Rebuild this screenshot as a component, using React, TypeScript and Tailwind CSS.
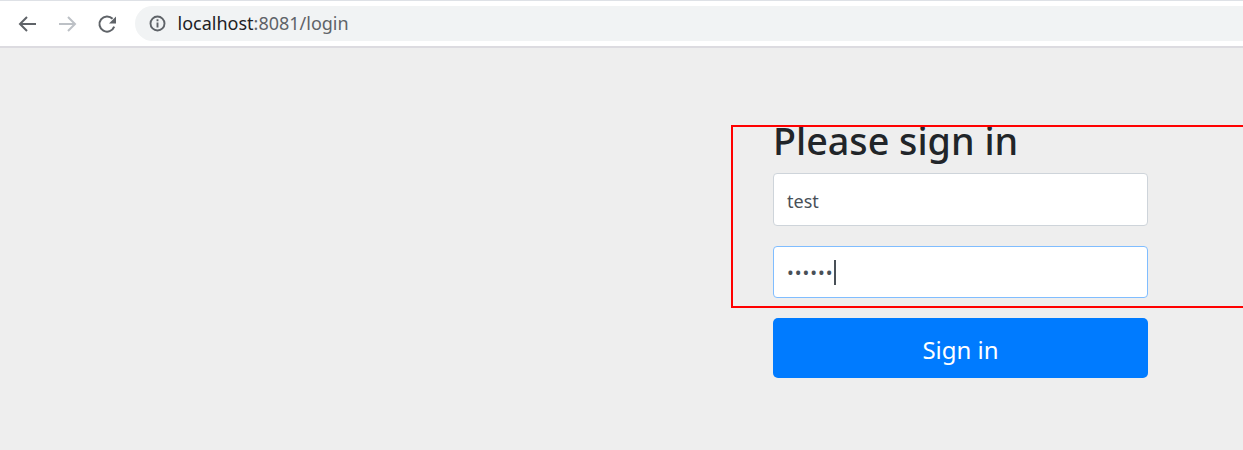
export default function App() {
  return (
    <div className="relative flex h-[450px] w-[1243px] flex-col overflow-hidden bg-[#eeeeee] font-['Noto_Sans',sans-serif]">
      {/* Browser toolbar */}
      <header className="flex h-[48px] shrink-0 items-start border-t border-b-2 border-t-[#dee1e6] border-b-[#dcdbe0] bg-white pl-[17px]">
        <div className="mt-[13px] flex items-center">
          <svg width="20" height="20" viewBox="0 0 20 20" fill="none" stroke="#5f6368" strokeWidth="2" className="mr-[20px]">
            <path d="M19 10H3M10 3l-7 7 7 7" />
          </svg>
          <svg width="20" height="20" viewBox="0 0 20 20" fill="none" stroke="#bdc1c6" strokeWidth="2" className="mr-[20px]">
            <path d="M2 10h16M11 3l7 7-7 7" />
          </svg>
          <svg width="20" height="20" viewBox="0 0 20 20" fill="none" className="mr-[18px]">
            <path d="M17.2 12.6A7.6 7.6 0 1 1 15.6 4.8" stroke="#5f6368" strokeWidth="2" />
            <path d="M19 2.5V9.5h-7z" fill="#5f6368" />
          </svg>
        </div>
        <div className="mt-[5px] flex h-[35px] flex-1 items-center rounded-l-full bg-[#f1f3f4] pl-[14px]">
          <svg width="17" height="17" viewBox="0 0 17 17" fill="none" className="mr-[11.5px]">
            <circle cx="8.5" cy="8.5" r="7" stroke="#5f6368" strokeWidth="1.9" />
            <path d="M8.5 7.5v5M8.5 4.2v2" stroke="#5f6368" strokeWidth="1.9" />
          </svg>
          <span className="pb-[2px] text-[18px] leading-none text-[#202124]">
            localhost<span className="text-[#5f6368]">:8081/login</span>
          </span>
        </div>
      </header>

      {/* Login form */}
      <main className="flex flex-1 flex-col pl-[773px] pt-[72px]">
        <form className="flex w-[375px] flex-col">
          <h1 className="mb-[8px] h-[45px] text-[37.7px] leading-[41px] font-medium whitespace-nowrap text-[#212529]">Please sign in</h1>
          <div className="mb-[20px] flex h-[53px] items-center rounded-[4px] border border-[#ced4da] bg-white px-[13px] pt-[4px] text-[18px] text-[#495057]">
            test
          </div>
          <div className="mb-[20px] flex h-[52px] items-center rounded-[4px] border border-[#80bdff] bg-white px-[13px] text-[#495057]">
            <span className="text-[18px] leading-none tracking-[1px]">••••••</span>
            <span className="h-[25px] w-[2px] bg-[#495057]" />
          </div>
          <button type="button" className="h-[60px] rounded-[5px] bg-[#007bff] pt-[3px] text-[24px] leading-none text-white">
            Sign in
          </button>
        </form>
      </main>

      {/* Red annotation box drawn over the screenshot */}
      <div className="absolute top-[125px] left-[731px] h-[183px] w-[560px] border-2 border-[#ff0000]" />
    </div>
  );
}
